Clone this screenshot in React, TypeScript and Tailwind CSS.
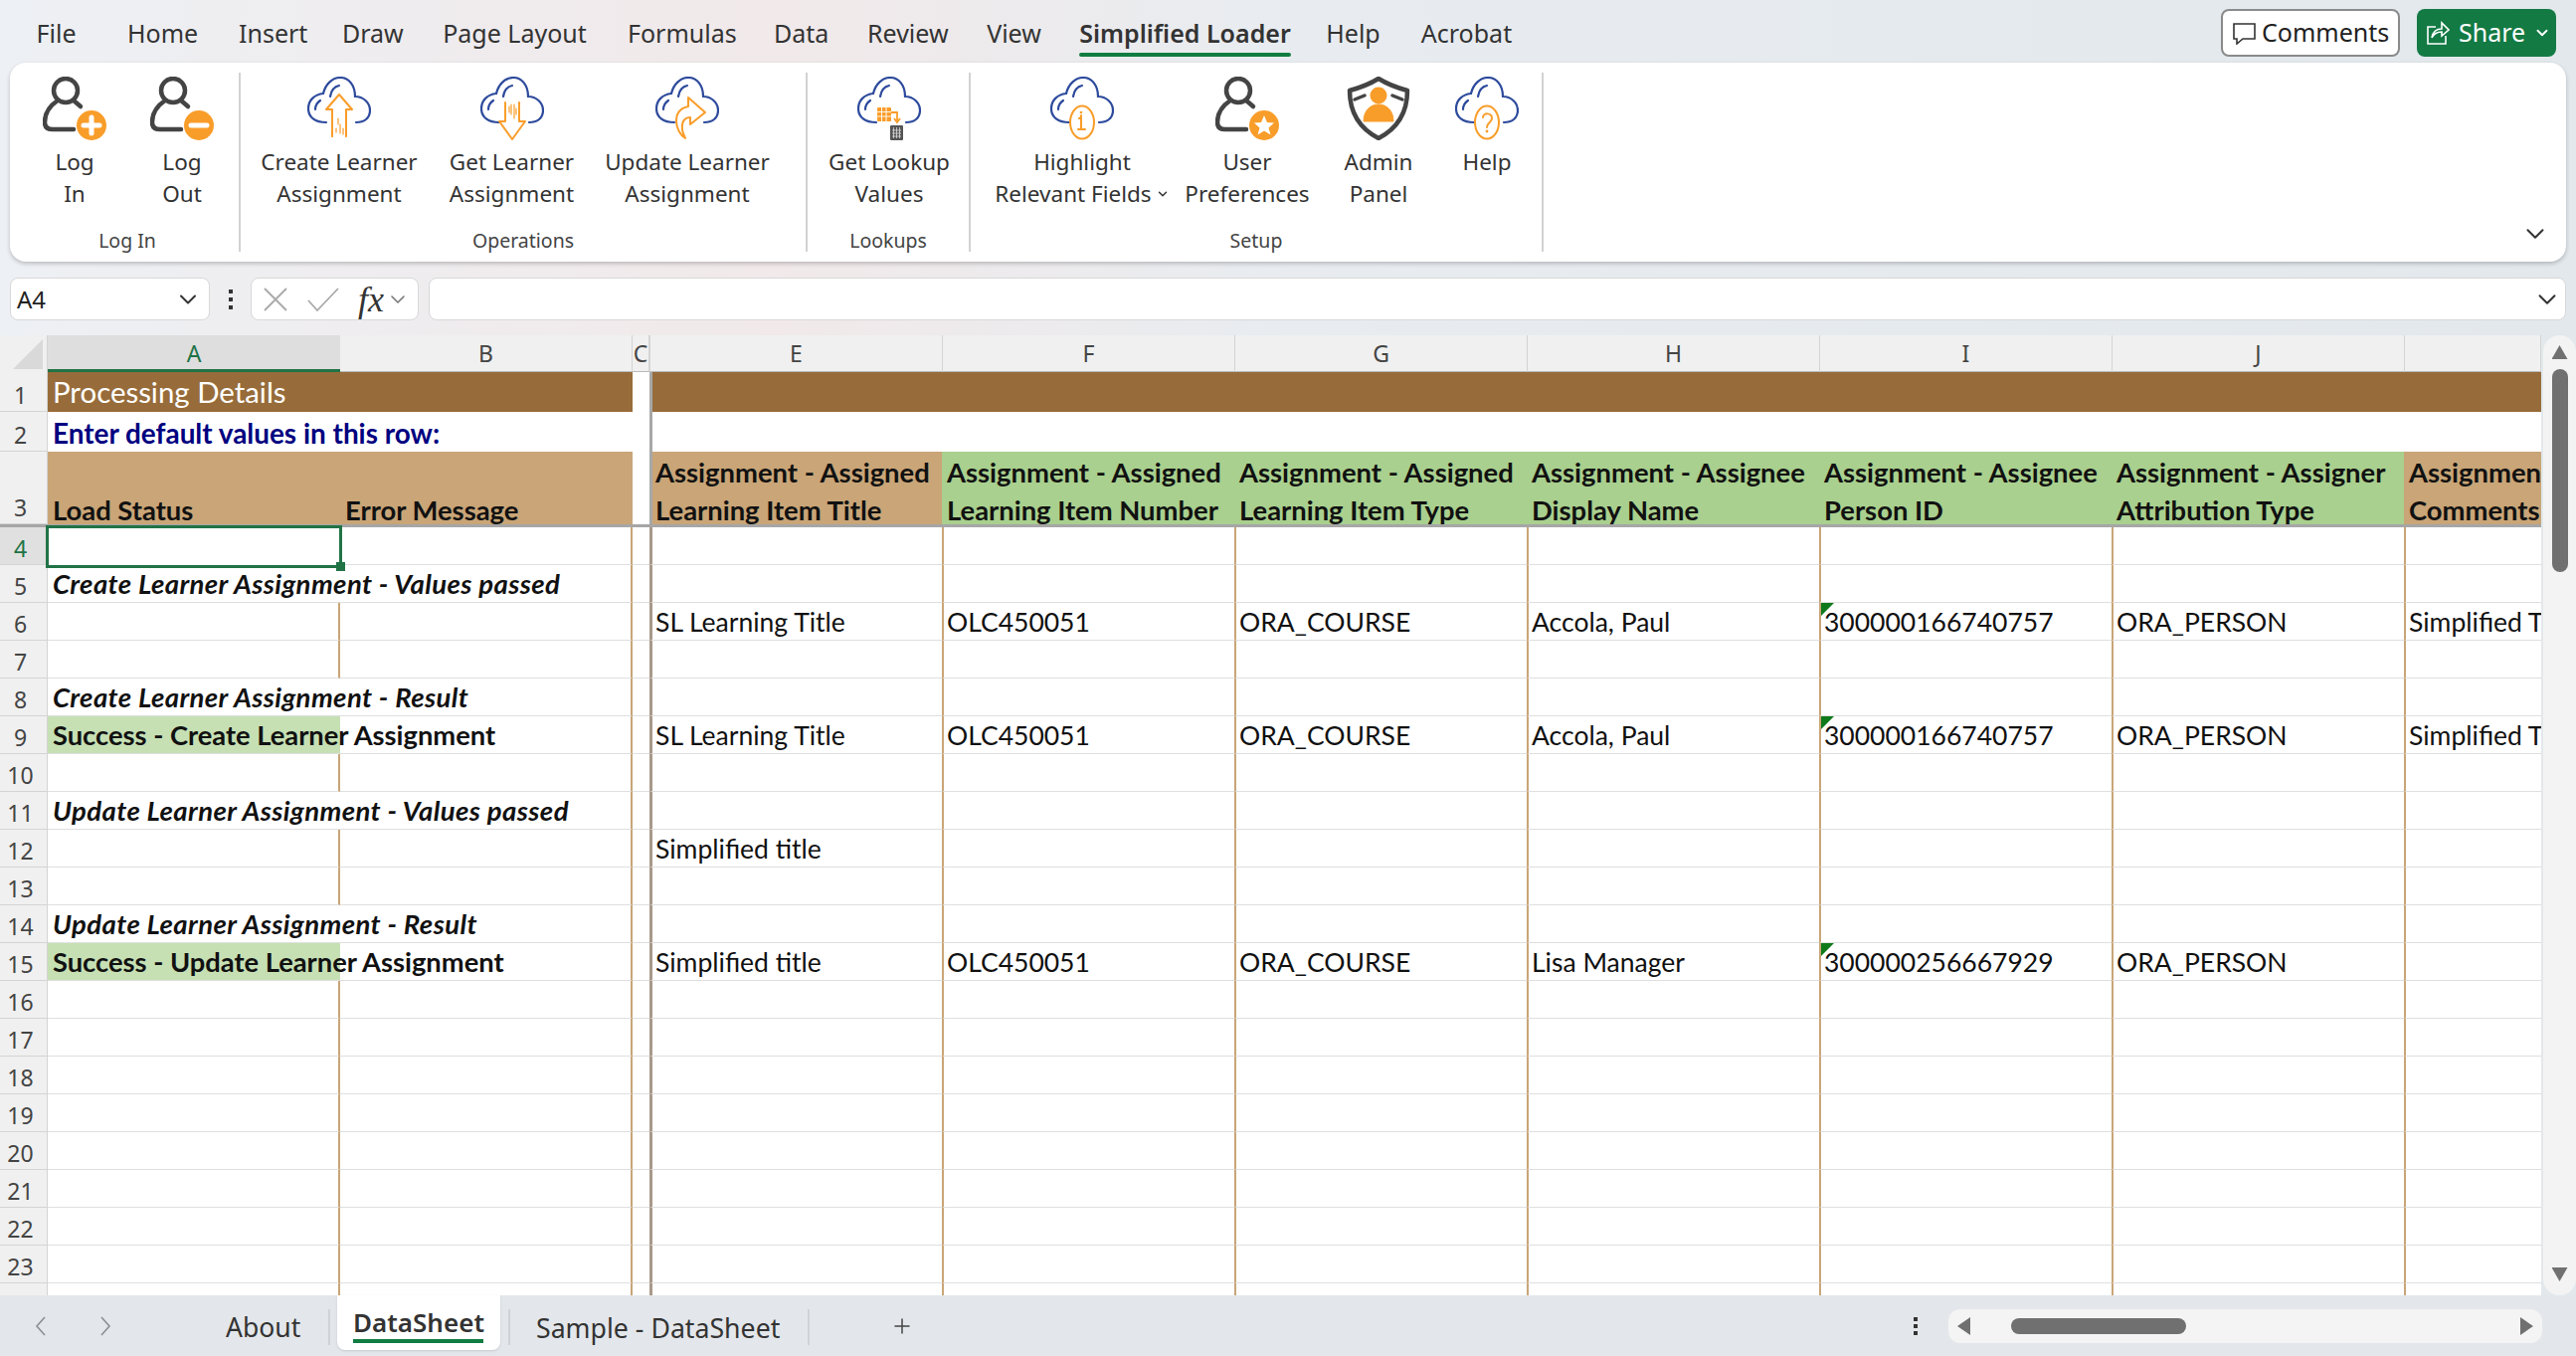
import { ChevronDown, Plus } from "lucide-react";

const orange = "#f99d2a";
const navy = "#2d4a9c";

function Person({ badge }: { badge: "plus" | "minus" | "star" }) {
  return (
    <svg width="64" height="64" viewBox="0 0 64 64" fill="none">
      <circle cx="23" cy="14" r="12" stroke="#444" strokeWidth="4.5" />
      <path d="M15 24 C6 30 2 38 2 46 C2 51 5 53 10 53 H31" stroke="#444" strokeWidth="4.5" strokeLinecap="round" />
      <path d="M31 24 L38 30" stroke="#444" strokeWidth="4.5" strokeLinecap="round" />
      <circle cx="49" cy="49" r="15" fill={orange} />
      {badge === "plus" && <path d="M49 41 V57 M41 49 H57" stroke="#fff" strokeWidth="5" strokeLinecap="round" />}
      {badge === "minus" && <path d="M41 49 H57" stroke="#fff" strokeWidth="5" strokeLinecap="round" />}
      {badge === "star" && <path d="M49 39 L52 46 L59 46.5 L53.5 51.5 L55.5 58.5 L49 54.5 L42.5 58.5 L44.5 51.5 L39 46.5 L46 46 Z" fill="#fff" />}
    </svg>
  );
}

function Cloud({ children }: { children?: React.ReactNode }) {
  return (
    <svg width="64" height="64" viewBox="0 0 64 64" fill="none">
      <path d="M19 46 C8 46 1 41 1 32 C1 24 7 18 16 17 C18 8 25 1 33 1 C42 1 48 9 48 20 C56 20 63 26 63 34 C63 42 57 46 49 46" stroke={navy} strokeWidth="2.2" strokeLinecap="round" />
      <path d="M8 33 C8 29 10 26 13 24 M23 20 C24 14 27 10 32 9" stroke={navy} strokeWidth="2.2" strokeLinecap="round" />
      {children}
    </svg>
  );
}

function LogoIcon({ name }: { name: string }) {
  const line = { stroke: orange, strokeWidth: 2, strokeLinecap: "round" as const, strokeLinejoin: "round" as const, fill: "#fff" };
  if (name === "in") return <Person badge="plus" />;
  if (name === "out") return <Person badge="minus" />;
  if (name === "user") return <Person badge="star" />;
  if (name === "up")
    return (
      <Cloud>
        <path d="M32 18 L19 33 H25 V60 H39 V33 H45 Z" {...line} />
        <path d="M31 42 V48 M33 48 V57 M36 52 V59 M29 52 V56" {...line} strokeWidth="1.2" />
        <path d="M26 60 H38" stroke="#fff" strokeWidth="3" />
      </Cloud>
    );
  if (name === "down")
    return (
      <Cloud>
        <path d="M25 26 V45 H19 L32 63 L45 45 H39 V26" {...line} />
        <path d="M31 28 V38 M34 28 V42 M29 30 V36 M36 32 V38" {...line} strokeWidth="1.2" />
      </Cloud>
    );
  if (name === "update")
    return (
      <Cloud>
        <path d="M33 21 L50 36 L35 48 V41 C27 41 24 50 30 62 C20 56 15 34 33 30 Z" {...line} />
      </Cloud>
    );
  if (name === "lookup")
    return (
      <Cloud>
        <rect x="20" y="31" width="14" height="14" fill={orange} rx="1" />
        <path d="M24.5 31 V45 M29 31 V45 M20 35.5 H34 M20 40 H34" stroke="#fff" strokeWidth="0.9" />
        <path d="M34 36 H40 V44 M37 42 L40 46 L43 42" stroke={orange} strokeWidth="1.8" fill="none" />
        <rect x="33" y="49" width="13" height="15" fill="#555" rx="1" />
        <path d="M36.5 51 V62 M39.5 51 V62 M42.5 51 V62 M35 54 H44 M35 57 H44 M35 60 H44" stroke="#ddd" strokeWidth="0.8" />
      </Cloud>
    );
  if (name === "info")
    return (
      <Cloud>
        <ellipse cx="32" cy="46" rx="12" ry="16.5" {...line} />
        <path d="M31 39 V53 M28 53 H35 M29 42 L31 41" stroke={orange} strokeWidth="2" strokeLinecap="round" />
        <circle cx="31" cy="36" r="1.3" fill={orange} />
      </Cloud>
    );
  if (name === "help")
    return (
      <Cloud>
        <ellipse cx="32" cy="46" rx="12" ry="16.5" {...line} />
        <path d="M28 41 C28 36 37 36 37 42 C37 46 32 46 32 51" stroke={orange} strokeWidth="2" strokeLinecap="round" fill="none" />
        <circle cx="32" cy="55" r="1.4" fill={orange} />
      </Cloud>
    );
  // admin shield
  return (
    <svg width="64" height="64" viewBox="0 0 64 64" fill="none">
      <path d="M32 2 C24 7 14 11 3 14 C3 32 9 50 32 62 C55 50 61 32 61 14 C50 11 40 7 32 2 Z" stroke="#444" strokeWidth="4.5" strokeLinejoin="round" />
      <path d="M8 23 L18 19 M46 19 L56 23" stroke="#444" strokeWidth="3.5" strokeLinecap="round" />
      <circle cx="32" cy="19" r="8.5" fill={orange} />
      <path d="M17 45 C17 34 24 28 32 28 C40 28 47 34 47 45 Z" fill={orange} stroke={orange} strokeWidth="1" strokeLinejoin="round" />
    </svg>
  );
}

const tabs = [
  { name: "File", w: "w-[41px]", ml: "ml-[36px]" },
  { name: "Home", w: "w-[71px]", ml: "ml-[51px]" },
  { name: "Insert", w: "w-[64px]", ml: "ml-[41px]" },
  { name: "Draw", w: "w-[61px]", ml: "ml-[40px]" },
  { name: "Page Layout", w: "w-[145px]", ml: "ml-[40px]" },
  { name: "Formulas", w: "w-[107px]", ml: "ml-[41px]" },
  { name: "Data", w: "w-[54px]", ml: "ml-[40px]" },
  { name: "Review", w: "w-[81px]", ml: "ml-[40px]" },
  { name: "View", w: "w-[57px]", ml: "ml-[38px]" },
  { name: "Simplified Loader", w: "w-[213px]", ml: "ml-[37px]", active: true },
  { name: "Help", w: "w-[55px]", ml: "ml-[35px]" },
  { name: "Acrobat", w: "w-[93px]", ml: "ml-[40px]" },
];

const groups = [
  {
    label: "Log In",
    w: "w-[231px]",
    pad: "pl-[10px]",
    labelPad: "pl-[5px]",
    buttons: [
      { icon: "in", lines: ["Log", "In"], w: "w-[108px]" },
      { icon: "out", lines: ["Log", "Out"], w: "w-[108px]" },
    ],
  },
  {
    label: "Operations",
    w: "w-[570px]",
    pad: "pl-[12px]",
    labelPad: "",
    buttons: [
      { icon: "up", lines: ["Create Learner", "Assignment"], w: "w-[174px]" },
      { icon: "down", lines: ["Get Learner", "Assignment"], w: "w-[173px]" },
      { icon: "update", lines: ["Update Learner", "Assignment"], w: "w-[180px]" },
    ],
  },
  {
    label: "Lookups",
    w: "w-[164px]",
    pad: "pl-0",
    labelPad: "",
    buttons: [{ icon: "lookup", lines: ["Get Lookup", "Values"], w: "w-[164px]" }],
  },
  {
    label: "Setup",
    w: "w-[576px]",
    pad: "pl-[12px]",
    labelPad: "",
    buttons: [
      { icon: "info", lines: ["Highlight", "Relevant Fields"], w: "w-[200px]", caret: true },
      { icon: "user", lines: ["User", "Preferences"], w: "w-[132px]" },
      { icon: "admin", lines: ["Admin", "Panel"], w: "w-[132px]" },
      { icon: "help", lines: ["Help"], w: "w-[86px]" },
    ],
  },
];

function Ribbon() {
  return (
    <div className="mx-[10px] flex h-[200px] rounded-2xl bg-white py-[10px] pl-[1px] shadow-[0_2px_4px_rgba(0,0,0,0.22)] font-['Noto_Sans',sans-serif]">
      {groups.map((g) => (
        <div key={g.label} className={`flex flex-col border-r-2 border-[#d2d2d2] ${g.w}`}>
          <div className={`flex pt-[4px] ${g.pad}`}>
            {g.buttons.map((b) => (
              <div key={b.icon} className={`flex shrink-0 flex-col items-center ${b.w}`}>
                <LogoIcon name={b.icon} />
                <div className="mt-[6px] text-center text-[22.5px] leading-[32px] whitespace-nowrap text-[#333]">
                  {b.lines.map((l, i) => (
                    <div key={l} className="flex items-center justify-center gap-[4px]">
                      {l}
                      {b.caret && i === 1 && <ChevronDown className="h-[14px] w-[14px]" strokeWidth={2.5} />}
                    </div>
                  ))}
                </div>
              </div>
            ))}
          </div>
          <div className={`mt-auto mb-[3px] text-center text-[19.5px] leading-[16px] text-[#444] ${g.labelPad}`}>{g.label}</div>
        </div>
      ))}
      <div className="flex flex-1 items-end justify-end pr-[16px] pb-[3px]">
        <ChevronDown className="h-[30px] w-[30px] text-[#333]" strokeWidth={1.6} />
      </div>
    </div>
  );
}

function FormulaBar() {
  return (
    <div className="mx-[10px] mt-[16px] flex h-[43px] items-stretch font-['Noto_Sans',sans-serif]">
      <div className="flex w-[201px] items-center justify-between rounded-lg border border-[#d8d8d8] bg-white pr-[7px] pl-[6px] text-[24px] text-[#222]">
        A4
        <ChevronDown className="h-[28px] w-[28px] text-[#333]" strokeWidth={1.7} />
      </div>
      <div className="flex w-[41px] flex-col items-center justify-center gap-[4px]">
        <span className="h-[4px] w-[4px] bg-[#333]" />
        <span className="h-[4px] w-[4px] bg-[#333]" />
        <span className="h-[4px] w-[4px] bg-[#333]" />
      </div>
      <div className="flex w-[169px] items-center rounded-lg border border-[#d8d8d8] bg-white pl-[11px]">
        <svg width="26" height="26" viewBox="0 0 26 26" fill="none" stroke="#a9a9a9" strokeWidth="1.8">
          <path d="M2 2 L24 24 M24 2 L2 24" />
        </svg>
        <svg className="ml-[18px]" width="34" height="26" viewBox="0 0 34 26" fill="none" stroke="#a9a9a9" strokeWidth="1.8">
          <path d="M2 14 L11 24 L32 2" />
        </svg>
        <span className="ml-[18px] font-['Liberation_Serif',serif] text-[36px] leading-none text-[#333] italic">fx</span>
        <ChevronDown className="ml-[2px] h-[24px] w-[24px] text-[#777]" strokeWidth={1.6} />
      </div>
      <div className="ml-[10px] flex flex-1 items-center justify-end rounded-lg border border-[#d8d8d8] bg-white pr-[3px]">
        <ChevronDown className="h-[30px] w-[30px] text-[#333]" strokeWidth={1.6} />
      </div>
    </div>
  );
}

const cols = [
  { l: "A", w: "w-[294px]" },
  { l: "B", w: "w-[294px]" },
  { l: "C", w: "w-[18px]" },
  { l: "E", w: "w-[294px]" },
  { l: "F", w: "w-[294px]" },
  { l: "G", w: "w-[294px]" },
  { l: "H", w: "w-[294px]" },
  { l: "I", w: "w-[294px]" },
  { l: "J", w: "w-[294px]" },
  { l: "", w: "w-[137px]" },
];

const valueRow = ["SL Learning Title", "OLC450051", "ORA_COURSE", "Accola, Paul", "300000166740757", "ORA_PERSON", "Simplified Title"];

const dataRows: Record<number, string[]> = {
  6: valueRow,
  9: valueRow,
  12: ["Simplified title"],
  15: ["Simplified title", "OLC450051", "ORA_COURSE", "Lisa Manager", "300000256667929", "ORA_PERSON"],
};

const titled: Record<number, string> = {
  5: "Create Learner Assignment - Values passed",
  8: "Create Learner Assignment - Result",
  11: "Update Learner Assignment - Values passed",
  14: "Update Learner Assignment - Result",
};

const success: Record<number, string> = {
  9: "Success - Create Learner Assignment",
  15: "Success - Update Learner Assignment",
};

const headers = [
  { a: "Assignment - Assigned", b: "Learning Item Title", bg: "bg-[#c9a577]", w: "w-[294px]" },
  { a: "Assignment - Assigned", b: "Learning Item Number", bg: "bg-[#a9d08e]", w: "w-[294px]" },
  { a: "Assignment - Assigned", b: "Learning Item Type", bg: "bg-[#a9d08e]", w: "w-[294px]" },
  { a: "Assignment - Assignee", b: "Display Name", bg: "bg-[#a9d08e]", w: "w-[294px]" },
  { a: "Assignment - Assignee", b: "Person ID", bg: "bg-[#a9d08e]", w: "w-[294px]" },
  { a: "Assignment - Assigner", b: "Attribution Type", bg: "bg-[#a9d08e]", w: "w-[294px]" },
  { a: "Assignment - Comments", b: "Comments", bg: "bg-[#c9a577]", w: "w-[138px]" },
];

function RowHead({ n, h, active }: { n: number; h: string; active?: boolean }) {
  return (
    <div className={`flex w-[48px] shrink-0 items-end justify-center border-r border-b border-[#d4d4d4] pr-[6px] font-['Noto_Sans',sans-serif] text-[23px] font-normal not-italic leading-[32px] ${h} ${active ? "bg-[#e0e0e0] text-[#217346]" : "bg-[#f0f0f0] text-[#444]"}`}>
      {n}
    </div>
  );
}

function CommentMark() {
  return (
    <svg className="absolute top-0 left-0" width="13" height="13" viewBox="0 0 13 13">
      <path d="M0 0 H13 L0 13 Z" fill="#0f7a1c" />
    </svg>
  );
}

function BodyRow({ n }: { n: number }) {
  const overflow = titled[n] || success[n];
  const selected = n === 4;
  const values = dataRows[n] || [];
  return (
    <div className="flex h-[38px] shrink-0 font-['Lato',sans-serif] text-[26.5px] text-[#111]">
      <RowHead n={n} h="h-[38px]" active={selected} />
      {/* A */}
      <div className={`relative w-[294px] shrink-0 border-b border-[#dfdfdf] ${overflow ? "" : "border-r-2 border-r-[#c9a577]"} ${selected ? "z-10 -mt-[2px] -mr-[2px] -ml-[2px] h-[43px] w-[298px] border-[3px]! border-[#217346]! bg-transparent" : ""}`}>
        {selected && <span className="absolute -right-[6px] -bottom-[6px] h-[9px] w-[9px] bg-[#217346]" />}
        {success[n] && <div className="absolute inset-y-0 left-0 w-[294px] bg-[#c6e0b4]" />}
        {overflow && (
          <span className={`absolute top-0 left-[5px] z-10 font-bold whitespace-nowrap leading-[37px] ${titled[n] ? "text-[27.5px] tracking-[0.4px] italic" : "text-[27.3px]"}`}>{overflow}</span>
        )}
      </div>
      {/* B */}
      <div className="w-[294px] shrink-0 border-r-2 border-b border-r-[#c9a577] border-b-[#dfdfdf]" />
      {/* C */}
      <div className="w-[17px] shrink-0 border-b border-[#dfdfdf]" />
      {/* E onward */}
      {headers.map((h, i) => (
        <div key={i} className={`relative shrink-0 border-b border-b-[#dfdfdf] pt-[1px] pl-[3px] whitespace-nowrap leading-[36px] ${h.w} ${i === 0 ? "border-l-[3px] border-l-[#a8998a]" : "border-l-2 border-l-[#c9a577]"}`}>
          {values[i] && i === 4 && <CommentMark />}
          {values[i]}
        </div>
      ))}
    </div>
  );
}

function Sheet() {
  const rows = Array.from({ length: 21 }, (_, i) => i + 4);
  return (
    <div className="flex min-h-0 flex-1">
      <div className="w-[2555px] shrink-0 overflow-hidden bg-white">
        {/* column letters */}
        <div className="flex h-[37px] bg-[#f0f0f0] font-['Noto_Sans',sans-serif] text-[23px] leading-[36px] text-[#444]">
          <div className="flex w-[48px] shrink-0 items-end justify-end border-r border-[#d4d4d4] pr-[4px] pb-[3px]">
            <div className="h-[30px] w-[30px] bg-[#d9d9d9] [clip-path:polygon(100%_0,100%_100%,0_100%)]" />
          </div>
          {cols.map((c, i) => (
            <div key={c.l + i} className={`shrink-0 text-center ${c.w} ${c.l === "A" ? "border-b-[3px] border-b-[#217346] bg-[#dedede] text-[#217346]" : "border-r border-b border-r-[#d4d4d4] border-b-[#b9b9b9]"} ${c.l === "C" ? "border-r-2 border-r-[#a8a8a8]" : ""}`}>
              {c.l}
            </div>
          ))}
        </div>

        {/* row 1 */}
        <div className="flex h-[40px] font-['Lato',sans-serif] text-[29.4px] leading-[40px] text-white">
          <RowHead n={1} h="h-[40px]" />
          <div className="w-[588px] shrink-0 bg-[#976c3a] pl-[5px]">Processing Details</div>
          <div className="w-[17px] shrink-0 bg-white" />
          <div className="flex-1 border-l-[3px] border-[#a8a8a8] bg-[#976c3a]" />
        </div>

        {/* row 2 */}
        <div className="flex h-[40px] font-['Lato',sans-serif] text-[27.9px] leading-[40px] font-bold text-[#000080]">
          <RowHead n={2} h="h-[40px]" />
          <div className="w-[605px] shrink-0 pt-[1px] pl-[5px]">Enter default values in this row:</div>
          <div className="flex-1 border-l-[3px] border-[#a8a8a8]" />
        </div>

        {/* row 3 */}
        <div className="flex h-[76px] border-b-[3px] border-[#a6a6a6] font-['Lato',sans-serif] text-[27.4px] leading-[36px] font-bold text-[#111]">
          <RowHead n={3} h="h-[73px]" />
          <div className="flex w-[588px] shrink-0 items-start bg-[#c9a577] pt-[41px]">
            <div className="w-[294px] pl-[5px]">Load Status</div>
            <div className="w-[294px] pl-[5px]">Error Message</div>
          </div>
          <div className="w-[17px] shrink-0 bg-white" />
          {headers.map((h, i) => (
            <div key={i} className={`flex shrink-0 flex-col gap-[2px] pt-[3px] whitespace-nowrap ${h.w} ${h.bg} ${i === 0 ? "border-l-[3px] border-[#a8a8a8] pl-[3px]" : "pl-[5px]"}`}>
              <div>{h.a}</div>
              <div>{h.b}</div>
            </div>
          ))}
        </div>

        {rows.map((n) => (
          <BodyRow key={n} n={n} />
        ))}
      </div>

      {/* vertical scrollbar */}
      <div className="ml-[2px] flex w-[33px] flex-col items-center rounded-full bg-[#f3f3f3] pt-[10px] pb-[14px]">
        <div className="h-[14px] w-[16px] bg-[#707070] [clip-path:polygon(50%_0,100%_100%,0_100%)]" />
        <div className="mt-[10px] h-[204px] w-[16px] rounded-full bg-[#707070]" />
        <div className="mt-auto h-[14px] w-[16px] bg-[#707070] [clip-path:polygon(0_0,100%_0,50%_100%)]" />
      </div>
    </div>
  );
}

function Caret({ dir, className }: { dir: "left" | "right"; className: string }) {
  return (
    <svg className={className} width="12" height="20" viewBox="0 0 12 20" fill="none" stroke="#8a8f94" strokeWidth="1.6">
      <path d={dir === "left" ? "M10 1 L2 10 L10 19" : "M2 1 L10 10 L2 19"} />
    </svg>
  );
}

function SheetBar() {
  return (
    <div className="flex h-[61px] shrink-0 items-start bg-[#e3e7eb] font-['Noto_Sans',sans-serif] text-[26px] text-[#333]">
      <Caret dir="left" className="mt-[21px] ml-[35px]" />
      <Caret dir="right" className="mt-[21px] ml-[53px]" />
      <span className="mt-[13px] ml-[115px] w-[103px] text-[26.5px]">About</span>
      <span className="mt-[14px] h-[36px] w-[2px] bg-[#cfd3d7]" />
      <div className="relative ml-[7px] h-[55px] w-[164px] rounded-b-lg bg-white text-center leading-[54px] font-semibold shadow-sm">
        DataSheet
        <span className="absolute bottom-[7px] left-[16px] h-[4px] w-[131px] bg-[#107c41]" />
      </div>
      <span className="mt-[14px] ml-[8px] h-[36px] w-[2px] bg-[#cfd3d7]" />
      <span className="mt-[13px] ml-[26px] w-[273px] text-[26.7px]">Sample - DataSheet</span>
      <span className="mt-[14px] h-[36px] w-[2px] bg-[#cfd3d7]" />
      <Plus className="mt-[19px] ml-[81px] h-[24px] w-[24px] text-[#444]" strokeWidth={1.5} />
      <div className="mt-[22px] ml-[1005px] flex flex-col gap-[3px]">
        <span className="h-[4px] w-[4px] bg-[#333]" />
        <span className="h-[4px] w-[4px] bg-[#333]" />
        <span className="h-[4px] w-[4px] bg-[#333]" />
      </div>
      <div className="mt-[14px] ml-[31px] flex h-[34px] w-[597px] items-center rounded-xl bg-[#f4f4f4] px-[9px]">
        <div className="h-[18px] w-[13px] bg-[#707070] [clip-path:polygon(100%_0,100%_100%,0_50%)]" />
        <div className="ml-[41px] h-[16px] w-[176px] rounded-lg bg-[#707070]" />
        <div className="ml-auto h-[18px] w-[13px] bg-[#707070] [clip-path:polygon(0_0,100%_50%,0_100%)]" />
      </div>
    </div>
  );
}

export default function App() {
  return (
    <div className="flex h-screen w-screen flex-col overflow-hidden bg-[linear-gradient(90deg,#edf0f4_0%,#f1e9ea_30%,#e8ecf0_50%,#e2e8ec_100%)]">
      {/* Tabs */}
      <div className="flex h-[63px] shrink-0 items-start font-['Noto_Sans',sans-serif] text-[25px] text-[#333]">
        {tabs.map((t) => (
          <div key={t.name} className={`relative mt-[15px] h-[42px] shrink-0 text-center leading-[36px] whitespace-nowrap ${t.ml} ${t.w} ${t.active ? "font-semibold" : ""}`}>
            {t.name}
            {t.active && <span className="absolute right-0 bottom-0 left-0 h-[4px] rounded-full bg-[#107c41]" />}
          </div>
        ))}
        <div className="mt-[9px] ml-auto flex h-[48px] w-[180px] items-center gap-[6px] rounded-lg border-2 border-[#8a8a8a] bg-white pl-[9px] text-[25px] text-[#222]">
          <svg width="24" height="24" viewBox="0 0 24 24" fill="none" stroke="#333" strokeWidth="1.6">
            <path d="M2 3 H23 V18 H11 L5 23 V18 H2 Z" />
          </svg>
          Comments
        </div>
        <div className="mt-[9px] mr-[20px] ml-[17px] flex h-[48px] w-[140px] items-center rounded-lg bg-[#137a44] pl-[9px] text-[25px] text-white">
          <svg width="24" height="26" viewBox="0 0 24 26" fill="none" stroke="#fff" strokeWidth="1.6">
            <path d="M10 7 H2 V24 H20 V16" />
            <path d="M6 18 C7 12 11 9 16 9 V3 L23 10 L16 16 V12 C12 12 8 14 6 18 Z" />
          </svg>
          <span className="ml-[9px]">Share</span>
          <ChevronDown className="ml-[8px] h-[18px] w-[18px]" strokeWidth={2.5} />
        </div>
      </div>

      <Ribbon />
      <FormulaBar />
      <div className="h-[15px] shrink-0" />
      <Sheet />
      <SheetBar />
    </div>
  );
}
